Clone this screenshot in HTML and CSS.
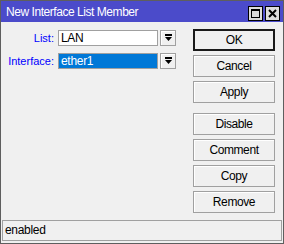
FILE: index.html
```html
<!DOCTYPE html>
<html lang="en">
<head>
    <meta charset="UTF-8">
    <title>New Interface List Member</title>
    <link rel="stylesheet" href="styles.css">
</head>
<body>
    <div class="window">
        <div class="titlebar">
            <span class="title">New Interface List Member</span>
            <div class="controls">
                <span class="control">
                    <svg width="13" height="13" viewBox="0 0 13 13"><rect x="2.5" y="2.5" width="8" height="8" fill="none" stroke="#000"/><rect x="2" y="2" width="9" height="2" fill="#000"/></svg>
                </span>
                <span class="control">
                    <svg width="13" height="13" viewBox="0 0 13 13"><path d="M3 3L10 10M10 3L3 10" stroke="#000" stroke-width="2"/></svg>
                </span>
            </div>
        </div>
        <div class="content">
            <div class="form">
                <div class="row">
                    <label class="label">List:</label>
                    <div class="field">LAN</div>
                    <span class="drop">
                        <svg width="9" height="8" viewBox="0 0 9 8"><rect x="1" y="0" width="7" height="2" fill="#000"/><polygon points="1,3 8,3 4.5,7" fill="#000"/></svg>
                    </span>
                </div>
                <div class="row">
                    <label class="label">Interface:</label>
                    <div class="field selected">ether1</div>
                    <span class="drop">
                        <svg width="9" height="8" viewBox="0 0 9 8"><rect x="1" y="0" width="7" height="2" fill="#000"/><polygon points="1,3 8,3 4.5,7" fill="#000"/></svg>
                    </span>
                </div>
            </div>
            <div class="actions">
                <div class="group">
                    <button class="button default">OK</button>
                    <button class="button">Cancel</button>
                    <button class="button">Apply</button>
                </div>
                <div class="group">
                    <button class="button">Disable</button>
                    <button class="button">Comment</button>
                    <button class="button">Copy</button>
                    <button class="button">Remove</button>
                </div>
            </div>
        </div>
        <div class="status">enabled</div>
    </div>
</body>
</html>
```

FILE: styles.css
```css
body {
    margin: 0;
    padding: 0;
    font-family: 'Liberation Sans', Arial, sans-serif;
    font-size: 11px;
}

.window {
    box-sizing: border-box;
    width: 284px;
    height: 244px;
    border: 1px solid #5e5e5e;
    background-color: #f0f0f0;
    display: flex;
    flex-direction: column;
}

.titlebar {
    height: 21px;
    background-color: #4b4bca;
    color: #ffffff;
    display: flex;
    align-items: center;
    justify-content: space-between;
    padding-left: 5px;
    padding-right: 3px;
}

.title {
    font-size: 12px;
    letter-spacing: -0.45px;
}

.controls {
    display: flex;
    gap: 2px;
    margin-top: 3px;
}

.control {
    box-sizing: border-box;
    width: 15px;
    height: 15px;
    background-color: #dcdcdc;
    border: 1px solid #000000;
    display: flex;
    align-items: center;
    justify-content: center;
}

.content {
    flex: 1;
    display: flex;
    justify-content: space-between;
    padding: 7px 8px 0 0;
}

.form {
    display: flex;
    flex-direction: column;
    gap: 7px;
    padding-top: 1px;
}

.row {
    display: flex;
    align-items: center;
    height: 16px;
}

.label {
    width: 53px;
    text-align: right;
    color: #0000ff;
    margin-right: 4px;
}

.field {
    box-sizing: border-box;
    width: 100px;
    height: 16px;
    border: 1px solid #a0a0a0;
    background-color: #ffffff;
    padding: 0 2px;
    line-height: 14px;
    font-size: 12px;
    letter-spacing: -0.3px;
}

.field.selected {
    background-color: #0078d7;
    color: #ffffff;
}

.drop {
    box-sizing: border-box;
    width: 16px;
    height: 16px;
    margin-left: 2px;
    border: 1px solid #a0a0a0;
    background-color: #f0f0f0;
    box-shadow: inset 1px 1px 0 #ffffff;
    display: flex;
    align-items: center;
    justify-content: center;
}

.actions {
    display: flex;
    flex-direction: column;
    gap: 10px;
}

.group {
    display: flex;
    flex-direction: column;
    gap: 4px;
}

.button {
    box-sizing: border-box;
    width: 82px;
    height: 22px;
    padding: 0;
    font-family: 'Liberation Sans', Arial, sans-serif;
    font-size: 12px;
    letter-spacing: -0.4px;
    color: #000000;
    background-color: #f0f0f0;
    border: 1px solid #a0a0a0;
    box-shadow: inset 1px 1px 0 #ffffff;
}

.button.default {
    border: 2px solid #1a1a1a;
    box-shadow: none;
}

.status {
    box-sizing: border-box;
    height: 21px;
    margin: 0 1px 2px 1px;
    border: 1px solid #a0a0a0;
    padding-left: 2px;
    line-height: 19px;
    font-size: 12px;
    letter-spacing: -0.3px;
}
```
